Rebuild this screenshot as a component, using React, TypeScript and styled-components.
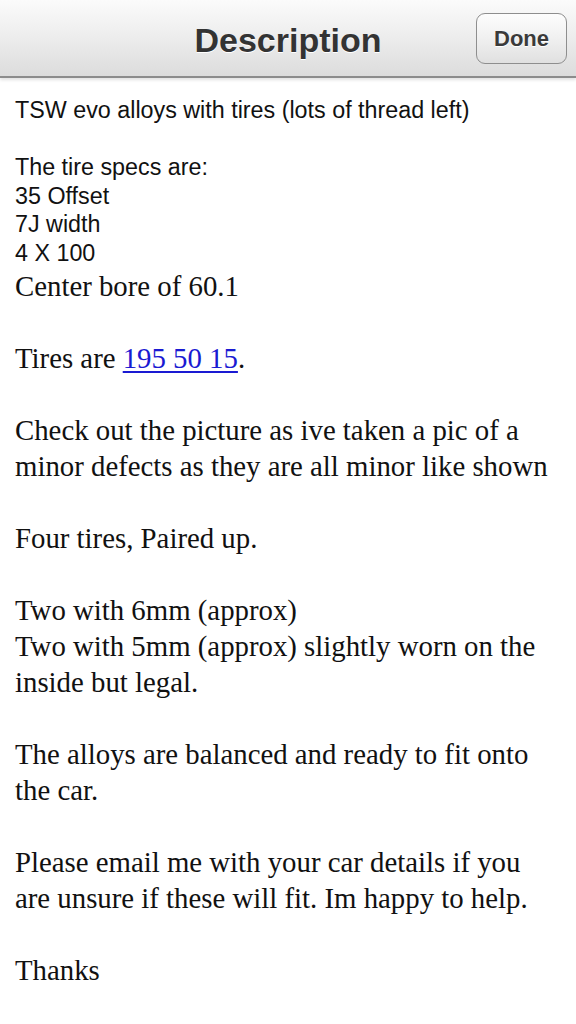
import React from 'react';
import styled, { createGlobalStyle } from 'styled-components';

const GlobalStyle = createGlobalStyle`
  html, body {
    margin: 0;
    padding: 0;
    background: #ffffff;
  }
  * {
    box-sizing: border-box;
  }
`;

const Screen = styled.div`
  width: 576px;
  min-height: 1024px;
  background: #ffffff;
  overflow: hidden;
`;

const NavBar = styled.header`
  position: relative;
  height: 78px;
  display: flex;
  align-items: center;
  justify-content: center;
  padding-top: 4px;
  background: linear-gradient(to bottom, #fbfbfb 0%, #eeeeee 45%, #dcdcdc 100%);
  border-bottom: 2px solid #8c8c8c;
  box-shadow: 0 2px 3px rgba(0, 0, 0, 0.12);

  h1 {
    margin: 0;
    font-family: 'Liberation Sans', Arial, sans-serif;
    font-size: 34px;
    font-weight: 700;
    color: #333333;
    text-shadow: 0 1px 0 #ffffff;
  }
`;

const DoneButton = styled.button`
  position: absolute;
  right: 9px;
  top: 13px;
  width: 91px;
  height: 51px;
  border: 1.5px solid #8e8e8e;
  border-radius: 9px;
  background: linear-gradient(to bottom, #fdfdfd 0%, #f0f0f0 50%, #e0e0e0 100%);
  font-family: 'Liberation Sans', Arial, sans-serif;
  font-size: 22px;
  font-weight: 700;
  color: #3a3a3a;
  text-shadow: 0 1px 0 #ffffff;
  padding: 0;
`;

const Body = styled.main`
  padding: 18px 15px 0;
`;

const SansBlock = styled.div`
  font-family: 'Liberation Sans', Arial, sans-serif;
  font-size: 23.3px;
  line-height: 28.6px;
  color: #111111;

  p {
    margin: 0 0 28.6px;
  }

  p:last-child {
    margin-bottom: 0;
  }
`;

const SerifBlock = styled.div`
  font-family: 'Liberation Serif', 'Times New Roman', serif;
  font-size: 28.8px;
  line-height: 36px;
  color: #111111;

  p {
    margin: 0 0 36px;
  }

  a {
    color: #1a1ad2;
    text-decoration: underline;
    text-underline-offset: 3px;
  }
`;

const App: React.FC = () => {
  return (
    <Screen>
      <GlobalStyle />
      <NavBar>
        <h1>Description</h1>
        <DoneButton>Done</DoneButton>
      </NavBar>
      <Body>
        <SansBlock>
          <p>TSW evo alloys with tires (lots of thread left)</p>
          <p>
            The tire specs are:
            <br />
            35 Offset
            <br />
            7J width
            <br />4 X 100
          </p>
        </SansBlock>
        <SerifBlock>
          <p>Center bore of 60.1</p>
          <p>
            Tires are <a href='#'>195 50 15</a>.
          </p>
          <p>
            Check out the picture as ive taken a pic of a minor defects as they are all minor
            like shown
          </p>
          <p>Four tires, Paired up.</p>
          <p>
            Two with 6mm (approx)
            <br />
            Two with 5mm (approx) slightly worn on the inside but legal.
          </p>
          <p>The alloys are balanced and ready to fit onto the car.</p>
          <p>
            Please email me with your car details if you are unsure if these will fit. Im happy
            to help.
          </p>
          <p>Thanks</p>
        </SerifBlock>
      </Body>
    </Screen>
  );
};

export default App;
